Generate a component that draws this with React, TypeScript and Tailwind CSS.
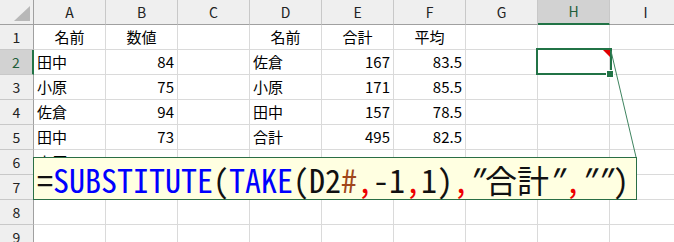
import React from "react";

type Cell = { t: string; a?: "l" | "r" | "c" };

const COLS = ["A", "B", "C", "D", "E", "F", "G", "H", "I"];

const L = (t: string): Cell => ({ t, a: "l" });
const R = (t: string): Cell => ({ t, a: "r" });
const C = (t: string): Cell => ({ t, a: "c" });
const E: Cell = { t: "" };

const ROWS: Cell[][] = [
  [C("名前"), C("数値"), E, C("名前"), C("合計"), C("平均"), E, E, E],
  [L("田中"), R("84"), E, L("佐倉"), R("167"), R("83.5"), E, E, E],
  [L("小原"), R("75"), E, L("小原"), R("171"), R("85.5"), E, E, E],
  [L("佐倉"), R("94"), E, L("田中"), R("157"), R("78.5"), E, E, E],
  [L("田中"), R("73"), E, L("合計"), R("495"), R("82.5"), E, E, E],
  [L("小原"), R("96"), E, E, E, E, E, E, E],
  [L("佐倉"), R("73"), E, E, E, E, E, E, E],
  [E, E, E, E, E, E, E, E, E],
  [E, E, E, E, E, E, E, E, E],
];

const FORMULA: [string, "k" | "b" | "r" | "h"][] = [
  ["=", "k"],
  ["SUBSTITUTE", "b"],
  ["(", "k"],
  ["TAKE", "b"],
  ["(D2", "k"],
  ["#", "h"],
  [",", "r"],
  ["-1", "k"],
  [",", "r"],
  ["1)", "k"],
  [",", "r"],
  ['"合計"', "k"],
  [",", "r"],
  ['"")', "k"],
];

const colorClass: Record<string, string> = {
  k: "text-[#111111]",
  b: "text-[#0000ff]",
  r: "text-[#ee0000]",
  h: "text-[#a0461a]",
};

const font = { fontFamily: '"Noto Sans CJK JP", "Noto Sans", sans-serif' };
const monoFont = {
  fontFamily:
    '"Noto Sans Mono CJK JP", "Noto Sans CJK JP", "DejaVu Sans Mono", monospace',
};

function FormulaChar({ ch, color }: { ch: string; color: string }) {
  const wide = /[\u3000-\u9fff]/.test(ch);
  const isQuote = ch === '"';
  return (
    <span
      className={
        "inline-block text-center " +
        (wide ? "w-[32px] " : "w-[16px] ") +
        (isQuote ? "-skew-x-[25deg] " : "") +
        colorClass[color]
      }
    >
      {ch}
    </span>
  );
}

export default function App() {
  return (
    <div
      className="relative w-[674px] h-[242px] overflow-hidden bg-white text-black"
      style={font}
    >
      <div className="grid grid-cols-[34px_repeat(9,72px)]">
        {/* header row */}
        <div className="h-[25px] bg-[#efefef] border-r border-b border-[#a0a0a0] flex items-end justify-end pr-[3px] pb-[3px]">
          <svg width="16" height="15" viewBox="0 0 16 15">
            <polygon points="16,0 16,15 0,15" fill="#b8b8b8" />
          </svg>
        </div>
        {COLS.map((c) =>
          c === "H" ? (
            <div
              key={c}
              className="h-[25px] bg-[#d2d2d2] border-r border-r-[#c8c8c8] border-b-2 border-b-[#217346] flex items-center justify-center text-[14px] text-[#1e5e3a]"
            >
              {c}
            </div>
          ) : (
            <div
              key={c}
              className="h-[25px] bg-[#efefef] border-r border-r-[#c8c8c8] border-b border-b-[#a0a0a0] flex items-center justify-center text-[14px] text-[#222222]"
            >
              {c}
            </div>
          )
        )}

        {ROWS.map((row, ri) => (
          <React.Fragment key={ri}>
            {ri === 1 ? (
              <div className="h-[25px] bg-[#d2d2d2] border-r-2 border-r-[#217346] border-b border-b-[#c8c8c8] flex items-center justify-center text-[14px] text-[#1e5e3a]">
                {ri + 1}
              </div>
            ) : (
              <div className="h-[25px] bg-[#efefef] border-r border-r-[#a0a0a0] border-b border-b-[#c8c8c8] flex items-center justify-center text-[14px] text-[#222222]">
                {ri + 1}
              </div>
            )}
            {row.map((cell, ci) => (
              <div
                key={ci}
                className={
                  "h-[25px] border-r border-b border-[#dadada] flex items-center px-[3px] text-[15px] whitespace-nowrap " +
                  (cell.a === "r"
                    ? "justify-end"
                    : cell.a === "c"
                    ? "justify-center"
                    : "justify-start")
                }
              >
                {cell.t}
              </div>
            ))}
          </React.Fragment>
        ))}
      </div>

      {/* selection box on H2 */}
      <div className="absolute left-[536px] top-[48px] w-[76px] h-[27px] border-2 border-[#217346]" />
      {/* comment indicator */}
      <svg className="absolute left-[603px] top-[50px]" width="7" height="7" viewBox="0 0 7 7">
        <polygon points="0,0 7,0 7,7" fill="#e00000" />
      </svg>
      {/* fill handle */}
      <div className="absolute left-[606px] top-[70px] w-[8px] h-[8px] bg-[#217346] border border-white" />

      {/* callout line */}
      <svg className="absolute left-0 top-0 pointer-events-none" width="674" height="242">
        <line x1="611" y1="51" x2="636" y2="157" stroke="#3f8460" strokeWidth="1" />
      </svg>

      {/* formula callout */}
      <div className="absolute left-[33px] top-[157px] w-[604px] h-[43px] bg-[#ffffe1] border border-[#2a6e45] flex items-center pl-[3px]">
        <div className="flex items-center text-[32px] leading-none whitespace-nowrap" style={monoFont}>
          {FORMULA.map(([s, c], i) =>
            Array.from(s).map((ch, j) => (
              <FormulaChar key={i + "-" + j} ch={ch} color={c} />
            ))
          )}
        </div>
      </div>
    </div>
  );
}
